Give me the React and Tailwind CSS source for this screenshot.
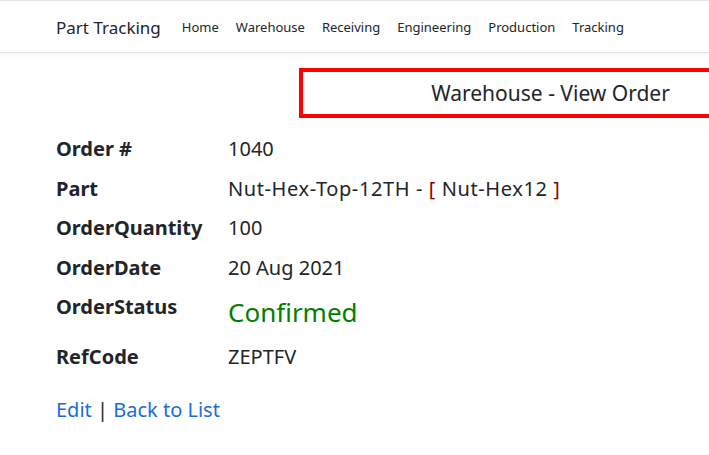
const font = { fontFamily: '"Noto Sans", "Open Sans", sans-serif' }

const navLinks = ['Home', 'Warehouse', 'Receiving', 'Engineering', 'Production', 'Tracking']

function Row({ label, children, tall }) {
  return (
    <div className={`flex ${tall ? 'min-h-[40px]' : 'min-h-[30px]'}`}>
      <div className="w-[172px] shrink-0 text-[20px] font-bold leading-[30px] text-[#212529]">{label}</div>
      <div className="text-[20px] leading-[30px] text-[#212529]">{children}</div>
    </div>
  )
}

export default function App() {
  return (
    <div className="h-[455px] w-[709px] overflow-hidden bg-white" style={font}>
      <header className="flex h-[53px] items-center border-t border-b border-[#e5e5e5] bg-white pt-[2px] pl-[56px] shadow-[0_2px_4px_rgba(0,0,0,0.05)]">
        <span className="mr-[21px] text-[17px] text-[#212529]">Part Tracking</span>
        <nav className="flex gap-[17px] text-[13px] text-[#212529]">
          {navLinks.map((l) => (
            <a key={l} href="#">{l}</a>
          ))}
        </nav>
      </header>

      <div className="pt-[15px] pl-[299px]">
        <div className="flex h-[50px] w-[503px] items-center justify-center border-4 border-[#ff0000] pt-[2px] text-[21px] text-[#212529]">
          Warehouse - View Order
        </div>
      </div>

      <div className="flex flex-col gap-[9.5px] pt-[16px] pl-[56px]">
        <Row label="Order #">1040</Row>
        <Row label="Part">
          <span className="tracking-[0.6px]">
            Nut-Hex-Top-12TH - <span className="text-[#8b0000]">[</span> Nut-Hex12{' '}
            <span className="text-[#8b0000]">]</span>
          </span>
        </Row>
        <Row label="OrderQuantity">100</Row>
        <Row label="OrderDate">20 Aug 2021</Row>
        <Row label="OrderStatus" tall>
          <span className="text-[26px] leading-[40px] text-[#008000]">Confirmed</span>
        </Row>
        <Row label="RefCode">ZEPTFV</Row>
      </div>

      <div className="mt-[23px] pl-[56px] text-[20px] leading-[30px] text-[#212529]">
        <a href="#" className="text-[#1a6dd8]">Edit</a> |{' '}
        <a href="#" className="text-[#1a6dd8]">Back to List</a>
      </div>
    </div>
  )
}
